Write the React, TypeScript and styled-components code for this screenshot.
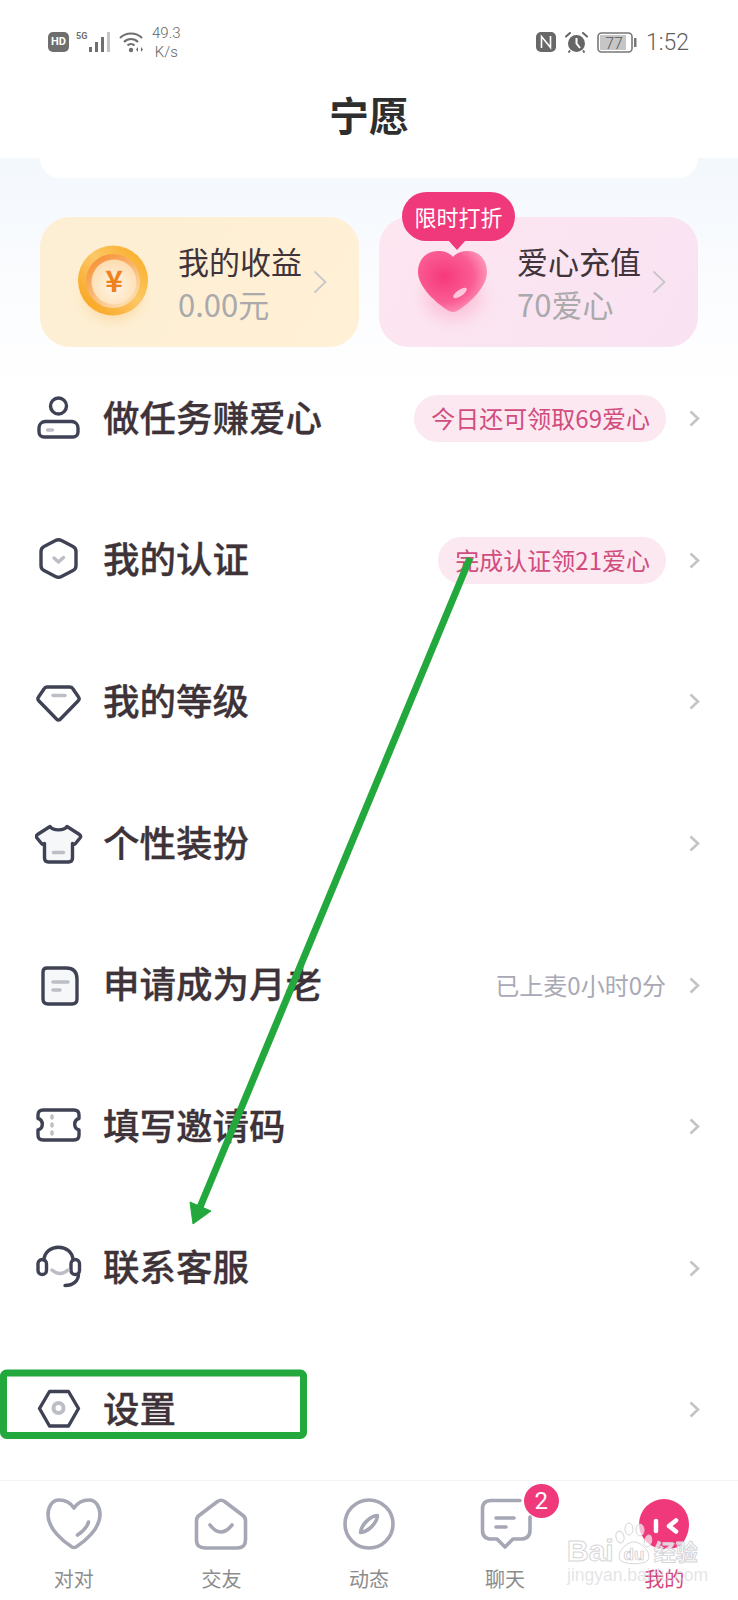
import React from 'react';
import styled, { createGlobalStyle } from 'styled-components';

const GlobalStyle = createGlobalStyle`
  html, body {
    margin: 0;
    padding: 0;
    background: #fff;
    font-family: "Noto Sans CJK SC", "Noto Sans", sans-serif;
  }
`;

const Page = styled.div`
  position: relative;
  width: 738px;
  height: 1600px;
  overflow: hidden;
  display: flex;
  flex-direction: column;
  background: #fff;
`;

// Status bar + title
const Header = styled.header`
  height: 158px;
  flex: none;
  display: flex;
  flex-direction: column;
`;

const StatusBar = styled.div`
  height: 66px;
  padding: 24px 49px 0 48px;
  box-sizing: border-box;
  display: flex;
  align-items: flex-start;
  justify-content: space-between;
  color: #6f6f6f;
  font-family: "Roboto", sans-serif;
`;

const StatusGroup = styled.div`
  display: flex;
  align-items: center;
  height: 36px;
  gap: ${props => props.$gap || 7}px;
`;

const HdChip = styled.span`
  width: 21px;
  height: 20px;
  border-radius: 5px;
  background: #6e6e6e;
  color: #fff;
  font-size: 11px;
  font-weight: 700;
  line-height: 20px;
  text-align: center;
`;

const SignalWrap = styled.div`
  display: flex;
  align-items: flex-start;
`;

const FiveG = styled.span`
  font-size: 9px;
  font-weight: 700;
  line-height: 10px;
  margin-right: 1px;
`;

const Speed = styled.div`
  width: 34px;
  margin: 2px 0 0 -3px;
  font-size: 15px;
  font-weight: 300;
  line-height: 19px;
  text-align: center;
  color: #666;
`;

const Clock = styled.span`
  font-size: 23px;
  font-weight: 300;
  color: #5f5f5f;
`;

const Title = styled.h1`
  margin: 21px 0 0;
  text-align: center;
  font-size: 40px;
  line-height: 54px;
  font-weight: 700;
  color: #2e2e2e;
`;

// Main scroll area
const Body = styled.main`
  flex: 1;
  min-height: 0;
  background: linear-gradient(180deg, #f3f8fd 0, #fbfcfe 130px, #fff 240px);
`;

const TopPanel = styled.div`
  height: 20px;
  margin: 0 40px;
  background: #fff;
  border-radius: 0 0 30px 30px;
`;

const CardRow = styled.section`
  margin: 39px 40px 0;
  display: grid;
  grid-template-columns: 319px 319px;
  column-gap: 20px;
`;

const Card = styled.div`
  position: relative;
  height: 130px;
  padding-left: 37px;
  box-sizing: border-box;
  display: flex;
  align-items: center;
  border-radius: 30px;
  background: ${props => props.$bg};
`;

const CardIcon = styled.div`
  width: 72px;
  height: 90px;
  flex: none;
  margin-right: 29px;

  svg {
    overflow: visible;
  }
`;

const CardText = styled.div`
  display: flex;
  flex-direction: column;
  margin-right: 11px;
`;

const CardTitle = styled.span`
  font-size: 31px;
  line-height: 43px;
  color: #40343a;
`;

const CardValue = styled.span`
  font-size: 31px;
  line-height: 43px;
  color: #aaa9ac;
`;

const SaleBadge = styled.div`
  position: absolute;
  z-index: 1;
  left: 23px;
  top: -25px;
  width: 113px;
  height: 49px;
  border-radius: 25px;
  background: #f0397b;
  color: #fff;
  font-size: 22px;
  line-height: 49px;
  text-align: center;

  &::after {
    content: '';
    position: absolute;
    left: 46px;
    bottom: -9px;
    border-left: 9px solid transparent;
    border-right: 9px solid transparent;
    border-top: 10px solid #f0397b;
  }
`;

const MenuList = styled.div`
  margin-top: 1px;
`;

const MenuRow = styled.div`
  height: 141.6px;
  padding: 0 38px 0 35px;
  box-sizing: border-box;
  display: flex;
  align-items: center;
`;

const MenuLabel = styled.span`
  flex: 1;
  margin-left: 20px;
  padding-bottom: 5px;
  font-size: 36.5px;
  font-weight: 500;
  color: #3e3338;
  -webkit-text-stroke: 0.3px #3e3338;
`;

const Pill = styled.span`
  height: 47px;
  padding: 0 16px 0 17px;
  border-radius: 24px;
  background: #fbe8f0;
  color: #d24c7e;
  font-size: 24px;
  line-height: 45px;
`;

const Hint = styled.span`
  color: #a9a9b6;
  font-size: 24px;
  padding-bottom: 2px;
`;

const RowArrow = styled.svg`
  width: 11px;
  height: 17px;
  margin-left: 23px;
  flex: none;
`;

// Bottom tabs
const TabBar = styled.nav`
  height: 120px;
  flex: none;
  border-top: 1px solid #f4f4f5;
  box-sizing: border-box;
  padding-top: 15px;
  display: grid;
  grid-template-columns: repeat(5, 147.6px);
  background: #fff;
`;

const Tab = styled.div`
  position: relative;
  display: flex;
  flex-direction: column;
  align-items: center;
  padding-right: ${props => props.$shift || 0}px;
  box-sizing: border-box;
`;

const TabLabel = styled.span`
  margin-top: 15px;
  font-size: 20px;
  line-height: 24px;
  color: ${props => (props.$active ? '#d1437d' : '#8c8c8c')};
`;

const CountBadge = styled.span`
  position: absolute;
  left: 81px;
  top: -12px;
  width: 35px;
  height: 34px;
  border-radius: 50%;
  background: #f0397b;
  color: #fff;
  font-family: "Roboto", sans-serif;
  font-size: 24px;
  line-height: 34px;
  text-align: center;
`;

const Watermark = styled.div`
  position: absolute;
  left: 567px;
  top: 1518px;
  width: 134px;
  pointer-events: none;
  font-family: "Liberation Sans", sans-serif;
`;

const MarkTop = styled.div`
  display: flex;
  align-items: flex-end;
  height: 48px;
`;

const MarkBrand = styled.span`
  flex: none;
  font-size: 30px;
  font-weight: 700;
  line-height: 30px;
  color: rgba(255, 255, 255, 0.65);
  -webkit-text-stroke: 1px #d6d6d9;
`;

const MarkJy = styled.span`
  flex: none;
  white-space: nowrap;
  margin: 0 0 2px 0;
  font-family: "Noto Sans CJK SC", sans-serif;
  font-size: 22px;
  font-weight: 700;
  line-height: 28px;
  color: rgba(255, 255, 255, 0.75);
  -webkit-text-stroke: 1px #d6d6d9;
`;

const MarkUrl = styled.div`
  margin-top: -2px;
  font-size: 17.5px;
  line-height: 22px;
  white-space: nowrap;
  color: rgba(205, 205, 210, 0.55);
`;

const Annotation = styled.svg`
  position: absolute;
  left: 0;
  top: 0;
  width: 738px;
  height: 1600px;
  pointer-events: none;
`;

const ICON = '#3f4254';
const SOFT = '#bcbec6';
const TAB = '#a5a7b5';

const MenuIcon: React.FC<{ name: string }> = ({ name }) => {
  const line = { fill: 'none', stroke: ICON, strokeWidth: 3.4, strokeLinecap: 'round' as const, strokeLinejoin: 'round' as const };
  const soft = { ...line, stroke: SOFT, strokeWidth: 3.4 };
  const tint = { ...line, fill: '#f6f7f9' };
  return (
    <svg width="48" height="48" viewBox="0 0 48 48" style={{ flex: 'none' }}>
      {name === 'user' && (
        <>
          <circle cx="23.5" cy="11" r="8" {...line} />
          <path d="M10 26.5H37a6.5 6.5 0 0 1 6 6.5v4a5 5 0 0 1-5 5H9a5 5 0 0 1-5-5v-4a6.5 6.5 0 0 1 6-6.5z" {...line} />
          <path d="M12.5 35h5" {...soft} />
        </>
      )}
      {name === 'badge' && (
        <>
          <path d="M20.5 4.5Q23.5 3 26.5 4.5L38 10.5Q41 12 41 15.5V29.5Q41 33 38 34.5L26.5 40.5Q23.5 42 20.5 40.500L9 34.500Q6 33 6 29.500V15.500Q6 12 9 10.500Z" {...line} />
          <path d="M19 22l4.500 4 5-4.500" {...soft} />
        </>
      )}
      {name === 'gem' && (
        <>
          <path d="M12 9H35Q37 9 38 11L43.5 19Q45 21 43 23L25.5 41Q23.5 43 21.5 41L4 23Q2 21 3.5 19L9 11Q10 9 12 9Z" {...line} />
          <path d="M18 17.5H30" {...soft} />
        </>
      )}
      {name === 'shirt' && (
        <>
          <path d="M15 6.5C18 11 29 11 32 6.5L44.5 14.5Q46.5 16 45 18L40.5 23.5Q39 25 37.5 23.5V38Q37.5 42 33.5 42H13.5Q9.5 42 9.5 38V23.5Q8 25 6.5 23.5L2 18Q.5 16 2.5 14.5Z" {...tint} />
          <path d="M18.5 32.5H28.5" {...soft} />
        </>
      )}
      {name === 'doc' && (
        <>
          <path d="M12 7H31Q42 7 42 18V38Q42 43 37 43H13Q8 43 8 38V11Q8 7 12 7Z" {...tint} />
          <path d="M18 21H33M18 29H25" {...soft} />
        </>
      )}
      {name === 'ticket' && (
        <>
          <path d="M8 7H39Q44 7 44 12V15.5A6 6 0 0 0 44 27V32Q44 37 39 37H8Q3 37 3 32V27A6 6 0 0 0 3 15.5V12Q3 7 8 7Z" {...line} />
          <path d="M17 13v2M17 21v2M17 29v2" {...soft} />
        </>
      )}
      {name === 'headset' && (
        <>
          <path d="M9 16C10 -1 37 -1 38 16" {...line} />
          <rect x="3" y="15.5" width="8.5" height="15" rx="4.25" {...line} />
          <rect x="36" y="15.5" width="8.5" height="15" rx="4.25" {...line} />
          <path d="M43.5 30C43.5 37 38 41.5 30 41.5" {...line} />
          <path d="M17 26Q25 33 33 26" {...soft} />
        </>
      )}
      {name === 'gear' && (
        <>
          <path d="M14.5 5.5H33.5L43.5 22.5L33.5 40H14.5L4.5 22.5Z" {...line} />
          <circle cx="23.5" cy="22" r="5" {...soft} strokeWidth={4} />
        </>
      )}
    </svg>
  );
};

const TabIcon: React.FC<{ name: string }> = ({ name }) => {
  const line = { fill: 'none', stroke: TAB, strokeWidth: 3.6, strokeLinecap: 'round' as const, strokeLinejoin: 'round' as const };
  return (
    <svg width="56" height="56" viewBox="0 0 56 56">
      {name === 'heart' && (
        <>
          <path d="M28 12C24 6 18 4 13 4C6 4 2 11 2 19C2 33 18 46 26 51Q28 52 30 51C38 46 54 33 54 19C54 11 50 4 43 4C38 4 32 6 28 12Z" {...line} />
          <path d="M42.500 26C41 32 36 36 31.500 39" {...line} />
        </>
      )}
      {name === 'home' && (
        <>
          <path d="M24.500 5.500Q28 3 31.500 5.500L50 19.500Q52.500 21.500 52.500 24.500V44Q52.500 52 44 52H12Q3.500 52 3.500 44V24.500Q3.500 21.500 6 19.500Z" {...line} />
          <path d="M17 29Q27.500 43 39 29" {...line} />
        </>
      )}
      {name === 'compass' && (
        <>
          <circle cx="28" cy="28" r="24" {...line} />
          <path d="M19.500 36.500C20 29 29 20 36.500 19.500C36 27 27 36 19.500 36.500Z" {...line} />
        </>
      )}
      {name === 'chat' && (
        <>
          <path d="M43 4.500H14Q5.500 4.500 5.500 13V34Q5.500 43 14 43H20L28 51L36 43H44Q53 43 53 34V21" {...line} />
          <path d="M19 22H37M19 31H29" {...line} />
        </>
      )}
      {name === 'mine' && (
        <>
          <path d="M28 3A25 25 0 0 1 53 28C53 36 50 44 44 50C38 53 32 53 28 53A25 25 0 0 1 28 3Z" fill="#f0397b" />
          <path d="M20 25V35" stroke="#fff" strokeWidth="4.500" strokeLinecap="round" />
          <path d="M40 24.500L33 30L40 35.500" fill="none" stroke="#fff" strokeWidth="4.500" strokeLinecap="round" strokeLinejoin="round" />
        </>
      )}
    </svg>
  );
};

const Coin = () => (
  <svg width="72" height="90" viewBox="0 0 72 90">
    <defs>
      <linearGradient id="coinRing" x1="0.1" y1="0.9" x2="0.9" y2="0.1">
        <stop offset="0" stopColor="#f9a51f" />
        <stop offset="0.55" stopColor="#fcc766" />
        <stop offset="1" stopColor="#f9ae2a" />
      </linearGradient>
      <linearGradient id="coinRim" x1="0.1" y1="0" x2="0.8" y2="1">
        <stop offset="0" stopColor="#f58a2e" />
        <stop offset="1" stopColor="#fde3b6" />
      </linearGradient>
      <radialGradient id="coinFace" cx="0.5" cy="0.6" r="0.6">
        <stop offset="0" stopColor="#fff6e6" />
        <stop offset="1" stopColor="#fddcae" />
      </radialGradient>
      <filter id="coinBlur" x="-60%" y="-60%" width="220%" height="220%"><feGaussianBlur stdDeviation="7" /></filter>
    </defs>
    <ellipse cx="36" cy="58" rx="28" ry="24" fill="#f8c77e" opacity="0.6" filter="url(#coinBlur)" />
    <circle cx="36" cy="43.500" r="35" fill="url(#coinRing)" />
    <circle cx="36" cy="44" r="27" fill="url(#coinRim)" />
    <circle cx="37" cy="45" r="22.500" fill="url(#coinFace)" />
    <text x="37" y="55" textAnchor="middle" fontFamily="Noto Sans CJK SC, sans-serif" fontSize="30" fontWeight="700" fill="#f0811f">¥</text>
  </svg>
);

const Heart = () => (
  <svg width="72" height="90" viewBox="0 0 72 90">
    <defs>
      <radialGradient id="heartFill" cx="0.38" cy="0.42" r="0.7">
        <stop offset="0" stopColor="#f6397c" />
        <stop offset="0.6" stopColor="#fa5c93" />
        <stop offset="1" stopColor="#fda5c3" />
      </radialGradient>
      <filter id="heartBlur" x="-60%" y="-60%" width="220%" height="220%"><feGaussianBlur stdDeviation="9" /></filter>
    </defs>
    <ellipse cx="37" cy="60" rx="28" ry="22" fill="#fba3c2" opacity="0.55" filter="url(#heartBlur)" />
    <path d="M37 20C33 15 27 13.500 21 14C9 14.500 2 24 2 35C2 50 20 66 33 74Q37 76 41 74C54 66 71 50 71 35C71 24 64 14.500 53 14C47 13.500 41 15 37 20Z" fill="url(#heartFill)" />
    <ellipse cx="44" cy="56" rx="8" ry="3.200" fill="#ffdbe7" opacity="0.85" transform="rotate(-35 44 56)" />
  </svg>
);

const SmallArrow: React.FC = () => (
  <svg width="14" height="24" viewBox="0 0 14 24" style={{ flex: 'none' }}>
    <path d="M1.500 1.500L12.500 12L1.500 22.500" fill="none" stroke="#c9c7c9" strokeWidth="1.8" />
  </svg>
);

const menuItems = [
  { icon: 'user', label: '做任务赚爱心', pill: '今日还可领取69爱心' },
  { icon: 'badge', label: '我的认证', pill: '完成认证领21爱心' },
  { icon: 'gem', label: '我的等级' },
  { icon: 'shirt', label: '个性装扮' },
  { icon: 'doc', label: '申请成为月老', hint: '已上麦0小时0分' },
  { icon: 'ticket', label: '填写邀请码' },
  { icon: 'headset', label: '联系客服' },
  { icon: 'gear', label: '设置' },
];

const tabs = [
  { icon: 'heart', label: '对对' },
  { icon: 'home', label: '交友' },
  { icon: 'compass', label: '动态' },
  { icon: 'chat', label: '聊天', shift: 23, count: 2 },
  { icon: 'mine', label: '我的', active: true },
];

const App: React.FC = () => (
  <Page lang="zh-CN">
    <GlobalStyle />
    <Header>
      <StatusBar>
        <StatusGroup $gap={7}>
          <HdChip>HD</HdChip>
          <SignalWrap>
            <FiveG>5G</FiveG>
            <svg width="24" height="22" viewBox="0 0 24 22">
              <rect x="1" y="16" width="3" height="5" fill="#6f6f6f" />
              <rect x="7" y="11" width="3" height="10" fill="#6f6f6f" />
              <rect x="13" y="6" width="3" height="15" fill="#6f6f6f" />
              <rect x="19" y="1" width="3" height="20" fill="#c4c4c4" />
            </svg>
          </SignalWrap>
          <svg width="26" height="22" viewBox="0 0 26 22">
            <path d="M1 7C7 1 17 1 23 7M5 11C9 7 15 7 19 11M8.500 14.500C10.500 12.500 13.500 12.500 15.500 14.500" fill="none" stroke="#6f6f6f" strokeWidth="2.2" />
            <circle cx="12" cy="19" r="2.200" fill="#6f6f6f" />
            <path d="M19 16l-2 2.500 2 2.500zM22 16l2 2.500-2 2.500z" fill="#6f6f6f" />
          </svg>
          <Speed>49.3<br />K/s</Speed>
        </StatusGroup>
        <StatusGroup $gap={9}>
          <svg width="20" height="20" viewBox="0 0 20 20">
            <rect x="0" y="0" width="20" height="20" rx="5" fill="#686868" />
            <path d="M5.500 16V4.500L14.500 15.500V4" fill="none" stroke="#fff" strokeWidth="1.600" />
          </svg>
          <svg width="23" height="21" viewBox="0 0 23 21">
            <path d="M1 4.500L5 1M22 4.500L18 1" stroke="#666" strokeWidth="2" strokeLinecap="round" />
            <circle cx="11.500" cy="11.500" r="8.500" fill="#666" />
            <path d="M11.500 6V11.500L15 16" fill="none" stroke="#fff" strokeWidth="2" />
            <path d="M5 18.500L3.500 20.500M18 18.500L19.500 20.500" stroke="#666" strokeWidth="2" />
          </svg>
          <svg width="40" height="21" viewBox="0 0 40 21">
            <rect x="1" y="1" width="34" height="19" rx="3.500" fill="none" stroke="#777" strokeWidth="1.600" />
            <rect x="3" y="3" width="26" height="15" fill="#c6c6c6" />
            <text x="17" y="16.500" textAnchor="middle" fontFamily="Roboto, sans-serif" fontSize="16" fontWeight="300" fill="#555">77</text>
            <rect x="37" y="6" width="2.500" height="9" fill="#777" />
          </svg>
          <Clock>1:52</Clock>
        </StatusGroup>
      </StatusBar>
      <Title>宁愿</Title>
    </Header>

    <Body>
      <TopPanel />
      <CardRow>
        <Card $bg="linear-gradient(120deg, #fdefd3, #fff0d6)">
          <CardIcon><Coin /></CardIcon>
          <CardText>
            <CardTitle>我的收益</CardTitle>
            <CardValue>0.00元</CardValue>
          </CardText>
          <SmallArrow />
        </Card>
        <Card $bg="linear-gradient(120deg, #fde6f0, #f9e3f3)">
          <SaleBadge>限时打折</SaleBadge>
          <CardIcon><Heart /></CardIcon>
          <CardText>
            <CardTitle>爱心充值</CardTitle>
            <CardValue>70爱心</CardValue>
          </CardText>
          <SmallArrow />
        </Card>
      </CardRow>

      <MenuList>
        {menuItems.map(item => (
          <MenuRow key={item.label}>
            <MenuIcon name={item.icon} />
            <MenuLabel>{item.label}</MenuLabel>
            {item.pill && <Pill>{item.pill}</Pill>}
            {item.hint && <Hint>{item.hint}</Hint>}
            <RowArrow viewBox="0 0 11 17">
              <path d="M1.500 1.500L9 8.500L1.500 15.500" fill="none" stroke="#c4c4c8" strokeWidth="2.600" />
            </RowArrow>
          </MenuRow>
        ))}
      </MenuList>
    </Body>

    <TabBar>
      {tabs.map(tab => (
        <Tab key={tab.label} $shift={tab.shift}>
          <TabIcon name={tab.icon} />
          <TabLabel $active={tab.active}>{tab.label}</TabLabel>
          {tab.count && <CountBadge>{tab.count}</CountBadge>}
        </Tab>
      ))}
    </TabBar>

    <Watermark>
      <MarkTop>
        <MarkBrand>Bai</MarkBrand>
        <svg width="40" height="46" viewBox="0 0 40 46" style={{ flex: 'none' }}>
          <g fill="rgba(255,255,255,.65)" stroke="#d6d6d9" strokeWidth="1">
            <ellipse cx="6" cy="17" rx="4" ry="6" transform="rotate(-15 6 17)" />
            <ellipse cx="15" cy="9" rx="4" ry="6" />
            <ellipse cx="26" cy="10" rx="4" ry="6" />
            <ellipse cx="34" cy="21" rx="3.500" ry="6" transform="rotate(15 34 21)" />
            <path d="M20 22C12 22 2 33 6 40C10 45 30 45 34 40C38 33 28 22 20 22Z" />
          </g>
          <text x="20" y="40" textAnchor="middle" fontFamily="Liberation Sans, sans-serif" fontSize="17" fontWeight="700" fill="rgba(255,255,255,.7)" stroke="#c9c9cd" strokeWidth="0.7">du</text>
        </svg>
        <MarkJy>经验</MarkJy>
      </MarkTop>
      <MarkUrl>jingyan.baidu.com</MarkUrl>
    </Watermark>

    <Annotation viewBox="0 0 738 1600">
      <rect x="3.500" y="1373" width="300" height="62.500" rx="3" fill="none" stroke="#22a83c" strokeWidth="7" />
      <path d="M470 558L198 1212" stroke="#22a83c" strokeWidth="7" fill="none" />
      <path d="M193 1224L190 1202L211 1211Z" fill="#22a83c" stroke="#22a83c" strokeWidth="1" />
    </Annotation>
  </Page>
);

export default App;
